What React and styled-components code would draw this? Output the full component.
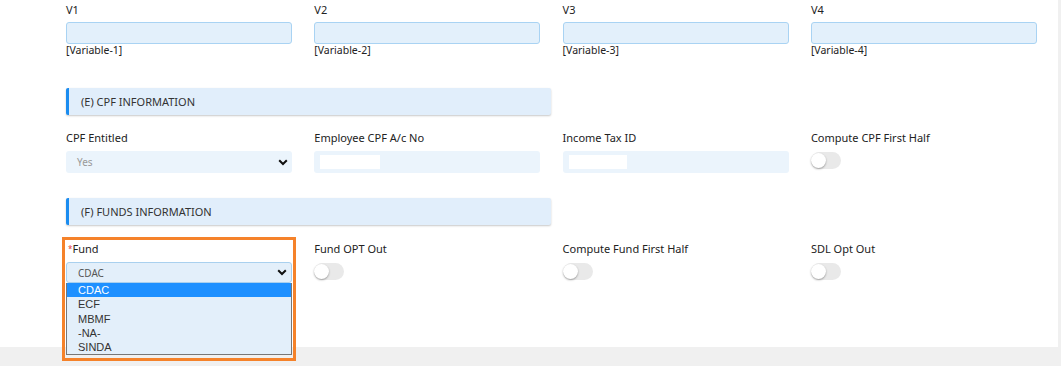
import React from 'react'
import styled, { createGlobalStyle } from 'styled-components'

const GlobalStyle = createGlobalStyle`
  html, body, #root {
    margin: 0;
    padding: 0;
    height: 100%;
    overflow: visible;
  }
  body {
    background: #f0f0f0;
    font-family: "Noto Sans", "Open Sans", sans-serif;
    color: #222;
  }
`

const Page = styled.div`
  min-height: 366px;
  background: #f0f0f0;
`

const Card = styled.div`
  width: 1058px;
  height: 347px;
  background: #fff;
  box-sizing: border-box;
  padding: 3px 0 0 66px;
`

const Grid = styled.div`
  display: grid;
  grid-template-columns: repeat(4, 226px);
  column-gap: 22.3px;
  margin-bottom: ${p => p.$mb || 0}px;
`

const Field = styled.div`
  position: relative;
  display: flex;
  flex-direction: column;
`

const Label = styled.div`
  font-size: 11px;
  line-height: 14px;
  height: 14px;
  margin-bottom: ${p => p.$mb || 6}px;
  color: #222;
  white-space: nowrap;
`

const Req = styled.span`
  color: #e53935;
  font-size: 8px;
  vertical-align: top;
  margin-left: 2px;
`

const TextBox = styled.div`
  height: 22px;
  box-sizing: border-box;
  background: #e3f0fb;
  border: 1px solid #a9d3f3;
  border-radius: 3px;
`

const Hint = styled.div`
  font-size: 10.5px;
  line-height: 13px;
  color: #222;
`

const SoftBox = styled.div`
  height: 22px;
  box-sizing: border-box;
  background: #ebf4fc;
  border-radius: 3px;
  display: flex;
  align-items: center;
  padding: 0 6px;
`

const Filled = styled.div`
  width: ${p => p.$w || 60}px;
  height: 14px;
  background: #fff;
`

const SelectBox = styled.div`
  height: ${p => p.$h || 22}px;
  box-sizing: border-box;
  background: ${p => (p.$bordered ? '#e3effa' : '#ebf4fc')};
  border: ${p => (p.$bordered ? '1px solid #a9d0ee' : 'none')};
  border-radius: 3px;
  display: flex;
  align-items: center;
  justify-content: space-between;
  padding: 0 4px 0 11px;
  font-size: 10px;
  color: ${p => (p.$bordered ? '#555' : '#999')};
`

const SectionHead = styled.div`
  width: 485px;
  height: 27px;
  box-sizing: border-box;
  background: #e1eefb;
  border-left: 3px solid #1a8cf0;
  border-radius: 2px;
  box-shadow: 0 1px 2px rgba(0, 0, 0, 0.22);
  display: flex;
  align-items: center;
  padding-left: 12px;
  font-size: 11px;
  color: #333;
  margin-bottom: ${p => p.$mb || 0}px;
`

const Toggle = styled.div`
  width: 30px;
  height: 17px;
  margin-top: 1px;
  border-radius: 9px;
  background: #e9e9e9;
  position: relative;

  &::after {
    content: '';
    position: absolute;
    left: 0;
    top: 1px;
    width: 15px;
    height: 15px;
    border-radius: 50%;
    background: #fff;
    box-shadow: 0 1px 2px rgba(0, 0, 0, 0.35);
  }
`

const Highlight = styled.div`
  position: absolute;
  left: -4px;
  top: -5px;
  width: 234px;
  height: 124px;
  box-sizing: border-box;
  border: 3px solid #f5822a;
  pointer-events: none;
  z-index: 3;
`

const OptionList = styled.ul`
  position: absolute;
  left: 0;
  top: 41px;
  width: 226px;
  margin: 0;
  padding: 0;
  list-style: none;
  box-sizing: border-box;
  border: 1px solid #777;
  border-top: none;
  background: #e3effa;
  font-family: "Liberation Sans", Arial, sans-serif;
  font-size: 11px;
  z-index: 2;
`

const Option = styled.li`
  height: 14.3px;
  line-height: 14.3px;
  padding-left: 11px;
  color: ${p => (p.$active ? '#fff' : '#333')};
  background: ${p => (p.$active ? '#1e90ff' : 'transparent')};
`

const Chevron = () => (
  <svg width="10" height="7" viewBox="0 0 10 7">
    <polyline points="1.2,1.2 5,5 8.8,1.2" fill="none" stroke="#111" strokeWidth="2" />
  </svg>
)

const variables = ['V1', 'V2', 'V3', 'V4']
const funds = ['CDAC', 'ECF', 'MBMF', '-NA-', 'SINDA']

const App = () => {
  return (
    <Page>
      <GlobalStyle />
      <Card>
        <Grid $mb={31}>
          {variables.map((v, i) => (
            <Field key={v}>
              <Label $mb={5}>{v}</Label>
              <TextBox />
              <Hint>[Variable-{i + 1}]</Hint>
            </Field>
          ))}
        </Grid>

        <SectionHead $mb={16}>(E) CPF INFORMATION</SectionHead>
        <Grid $mb={25}>
          <Field>
            <Label>CPF Entitled</Label>
            <SelectBox>
              <span>Yes</span>
              <Chevron />
            </SelectBox>
          </Field>
          <Field>
            <Label>Employee CPF A/c No</Label>
            <SoftBox><Filled /></SoftBox>
          </Field>
          <Field>
            <Label>Income Tax ID</Label>
            <SoftBox><Filled $w={58} /></SoftBox>
          </Field>
          <Field>
            <Label>Compute CPF First Half</Label>
            <Toggle />
          </Field>
        </Grid>

        <SectionHead $mb={17}>(F) FUNDS INFORMATION</SectionHead>
        <Grid>
          <Field>
            <Label><Req>*</Req>Fund</Label>
            <SelectBox $bordered $h={21}>
              <span>CDAC</span>
              <Chevron />
            </SelectBox>
            <OptionList>
              {funds.map((f, i) => (
                <Option key={f} $active={i === 0}>{f}</Option>
              ))}
            </OptionList>
            <Highlight />
          </Field>
          <Field>
            <Label>Fund OPT Out</Label>
            <Toggle />
          </Field>
          <Field>
            <Label>Compute Fund First Half</Label>
            <Toggle />
          </Field>
          <Field>
            <Label>SDL Opt Out</Label>
            <Toggle />
          </Field>
        </Grid>
      </Card>
    </Page>
  )
}

export default App
